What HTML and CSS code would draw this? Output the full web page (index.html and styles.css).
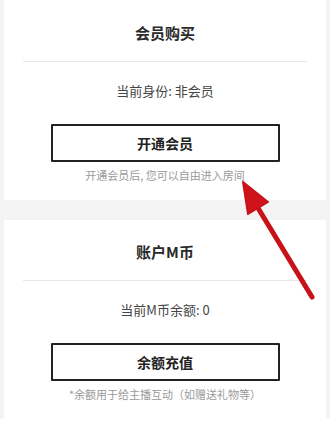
FILE: index.html
```html
<!DOCTYPE html>
<html lang="zh-CN">
<head>
<meta charset="UTF-8">
<meta name="viewport" content="width=device-width, initial-scale=1.0">
<title>会员购买</title>
<link rel="stylesheet" href="styles.css">
</head>
<body>
    <div class="page">
        <div class="card">
            <div class="card-title">会员购买</div>
            <div class="divider"></div>
            <div class="info">当前身份: 非会员</div>
            <button class="action">开通会员</button>
            <div class="hint">开通会员后, 您可以自由进入房间</div>
        </div>
        <div class="card">
            <div class="card-title">账户M币</div>
            <div class="divider"></div>
            <div class="info">当前M币余额: 0</div>
            <button class="action">余额充值</button>
            <div class="hint">*余额用于给主播互动（如赠送礼物等）</div>
        </div>
        <svg class="arrow" width="330" height="432" viewBox="0 0 330 432">
            <line x1="312" y1="297" x2="258" y2="208" stroke="#c8121a" stroke-width="5" stroke-linecap="round"/>
            <polygon points="243,182 268,202 248,214" fill="#d0121a" stroke="#c8121a" stroke-width="2" stroke-linejoin="round"/>
        </svg>
    </div>
</body>
</html>
```

FILE: styles.css
```css
body {
    margin: 0;
    background-color: #fff;
    font-family: "Noto Sans CJK SC", "Noto Sans", sans-serif;
    color: #333;
}

.page {
    position: relative;
    width: 330px;
    height: 432px;
    padding: 0 4px;
    box-sizing: border-box;
    background: linear-gradient(#f3f3f3, #f3f3f3) no-repeat 0 0 / 100% 419px;
}

.card {
    background-color: #fff;
    height: 200px;
    padding-top: 23px;
    box-sizing: border-box;
    display: flex;
    flex-direction: column;
    align-items: center;
}

.card + .card {
    margin-top: 20px;
    height: 199px;
    padding-top: 22px;
}

.card-title {
    font-size: 15px;
    line-height: 20px;
    font-weight: 600;
    color: #2a2a2a;
}

.divider {
    align-self: stretch;
    margin: 18px 19px 0;
    border-top: 1px solid #e6e6e6;
}

.info {
    margin-top: 20px;
    font-size: 13px;
    line-height: 18px;
    color: #444;
}

.action {
    margin-top: 24px;
    width: 229px;
    height: 38px;
    background: #fff;
    border: 2px solid #222;
    border-radius: 1px;
    font-family: inherit;
    font-size: 14px;
    font-weight: 600;
    color: #222;
    cursor: pointer;
}

.hint {
    margin-top: 5px;
    font-size: 11px;
    line-height: 16px;
    color: #9a9a9a;
}

.arrow {
    position: absolute;
    left: 0;
    top: 0;
    pointer-events: none;
}
```
